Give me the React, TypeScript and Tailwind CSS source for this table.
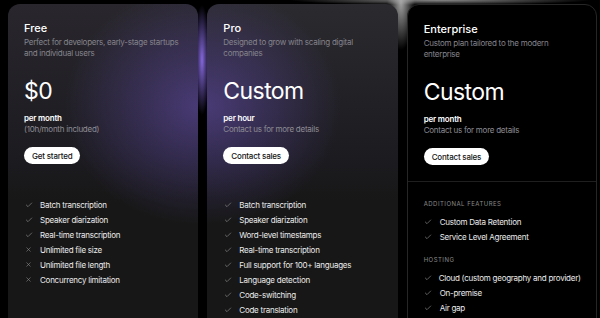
import { Check, X } from "lucide-react";

// Pricing tiers: two tinted cards on a glowing backdrop, plus a black enterprise card.

type Feature = { label: string; ok: boolean };

const freeFeatures: Feature[] = [
  { label: "Batch transcription", ok: true },
  { label: "Speaker diarization", ok: true },
  { label: "Real-time transcription", ok: true },
  { label: "Unlimited file size", ok: false },
  { label: "Unlimited file length", ok: false },
  { label: "Concurrency limitation", ok: false },
];

const proFeatures: Feature[] = [
  "Batch transcription",
  "Speaker diarization",
  "Word-level timestamps",
  "Real-time transcription",
  "Full support for 100+ languages",
  "Language detection",
  "Code-switching",
  "Code translation",
].map((label) => ({ label, ok: true }));

function FeatureRow({ f }: { f: Feature }) {
  return (
    <li className="flex h-[15px] items-center gap-[7px] whitespace-nowrap text-[8px] tracking-[-0.25px] text-[#ececec]">
      <span className="flex w-[9px] justify-center text-[#8d8d8d]">
        {f.ok ? <Check className="h-[8px] w-[8px]" strokeWidth={2} /> : <X className="h-[7px] w-[7px]" strokeWidth={2} />}
      </span>
      {f.label}
    </li>
  );
}

function Head({
  name,
  desc,
  price,
  unit,
  note,
  cta,
}: {
  name: string;
  desc: string;
  price: string;
  unit: string;
  note: string;
  cta: string;
}) {
  return (
    <div className="px-4 pb-4 pt-[17px]">
      <h3 className="text-[11px] font-medium leading-[14px] text-white">{name}</h3>
      <p className="mt-[2px] w-[162px] text-[8px] leading-[11px] tracking-[-0.25px] text-[#85848c]">{desc}</p>
      <p className="mt-[19px] text-[23px] font-normal leading-[26px] tracking-tight text-white">{price}</p>
      <p className="mt-[9px] text-[8px] font-semibold leading-[11px] tracking-[-0.2px] text-white">{unit}</p>
      <p className="text-[8px] leading-[11px] tracking-[-0.25px] text-[#8e8d94]">{note}</p>
      <button
        type="button"
        className="mt-[12px] flex h-[17px] items-center rounded-full bg-white px-[8px] text-[8px] font-medium tracking-[-0.2px] text-[#141414]"
      >
        {cta}
      </button>
    </div>
  );
}

export default function App() {
  return (
    <div
      className="h-[318px] w-[600px] overflow-hidden bg-black bg-[radial-gradient(ellipse_8px_55px_at_202px_60px,#8468dc,transparent),radial-gradient(ellipse_14px_50px_at_401px_0px,#a8a8a8,transparent),radial-gradient(ellipse_150px_5px_at_440px_0px,#8a8a8a,transparent)] pl-2 pr-[3px] pt-1 font-['Inter',sans-serif]"
    >
      <div className="grid h-[340px] grid-cols-3 gap-[9px]">
        <div className="overflow-hidden rounded-xl bg-[radial-gradient(ellipse_70%_35%_at_100%_30%,rgba(98,76,170,0.6),transparent),linear-gradient(180deg,#29272d_0%,#1c1b20_45%,#171717_58%)]">
          <Head
            name="Free"
            desc="Perfect for developers, early-stage startups and individual users"
            price="$0"
            unit="per month"
            note="(10h/month included)"
            cta="Get started"
          />
          <ul className="pt-[17px] pl-4">
            {freeFeatures.map((f) => (
              <FeatureRow key={f.label} f={f} />
            ))}
          </ul>
        </div>

        <div className="overflow-hidden rounded-xl bg-[radial-gradient(ellipse_70%_35%_at_0%_30%,rgba(98,76,170,0.6),transparent),linear-gradient(180deg,#2b2a2f_0%,#1c1b20_45%,#171717_58%)]">
          <Head
            name="Pro"
            desc="Designed to grow with scaling digital companies"
            price="Custom"
            unit="per hour"
            note="Contact us for more details"
            cta="Contact sales"
          />
          <ul className="pt-[17px] pl-4">
            {proFeatures.map((f) => (
              <FeatureRow key={f.label} f={f} />
            ))}
          </ul>
        </div>

        <div className="overflow-hidden rounded-xl border border-[#262626] bg-black">
          <Head
            name="Enterprise"
            desc="Custom plan tailored to the modern enterprise"
            price="Custom"
            unit="per month"
            note="Contact us for more details"
            cta="Contact sales"
          />
          <div className="border-t border-[#1f1f1f] px-4 pt-[17px]">
            <p className="text-[6px] uppercase leading-[10px] tracking-[0.08em] text-[#8a8a8a]">Additional features</p>
            <ul className="mt-[5px]">
              <FeatureRow f={{ label: "Custom Data Retention", ok: true }} />
              <FeatureRow f={{ label: "Service Level Agreement", ok: true }} />
            </ul>
            <p className="mt-[11px] text-[6px] uppercase leading-[10px] tracking-[0.08em] text-[#8a8a8a]">Hosting</p>
            <ul className="mt-[5px]">
              <FeatureRow f={{ label: "Cloud (custom geography and provider)", ok: true }} />
              <FeatureRow f={{ label: "On-premise", ok: true }} />
              <FeatureRow f={{ label: "Air gap", ok: true }} />
            </ul>
          </div>
        </div>
      </div>
    </div>
  );
}
